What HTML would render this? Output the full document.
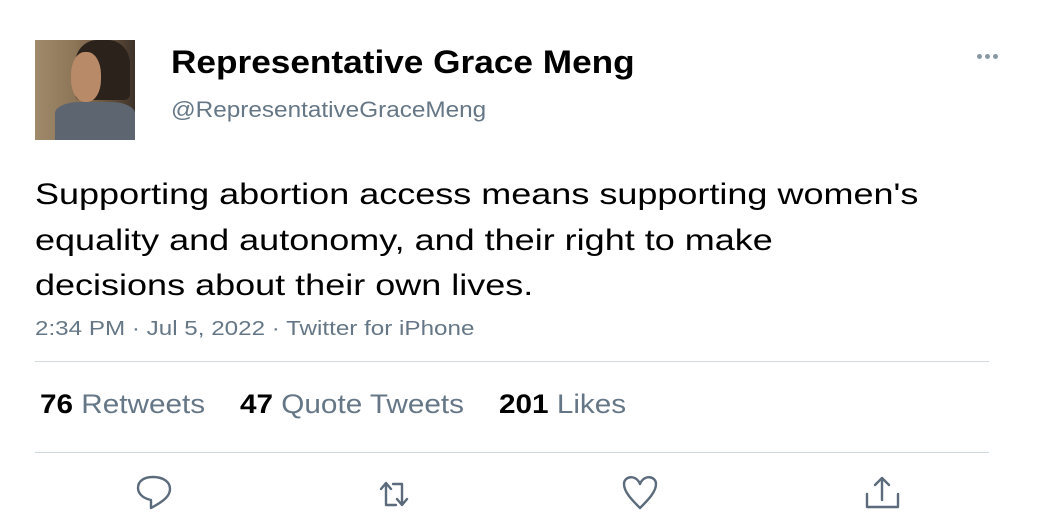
<!DOCTYPE html>
<html><head><meta charset="utf-8"><style>
body{margin:0;width:1050px;height:525px;background:#fff;font-family:"Liberation Sans",Arial,sans-serif;position:relative;overflow:hidden}
.a{position:absolute;white-space:nowrap;transform-origin:0 0}
</style></head><body>
<div class="a" style="left:35px;top:40px;width:100px;height:100px;background:linear-gradient(90deg,#a08a6c 0%,#8d7557 40%,#6b5640 70%,#3d3128 100%)">
<div style="position:absolute;left:40px;top:0;width:55px;height:60px;background:#2b221c;border-radius:40% 40% 10% 10%"></div>
<div style="position:absolute;left:36px;top:12px;width:30px;height:50px;background:#b88a68;border-radius:45%"></div>
<div style="position:absolute;left:20px;top:62px;width:80px;height:38px;background:#5d6570;border-radius:30% 30% 0 0"></div>
</div>
<div class="a" style="left:171px;top:44px;font-size:32px;font-weight:bold;color:#000;transform:scaleX(1.1)">Representative Grace Meng</div>
<div class="a" style="left:171px;top:97px;font-size:22px;color:#657786;transform:scaleX(1.105)">@RepresentativeGraceMeng</div>
<div class="a" style="left:977px;top:54px;width:30px;height:6px">
<span style="position:absolute;left:0;width:5px;height:5px;border-radius:50%;background:#8899a6"></span>
<span style="position:absolute;left:8px;width:5px;height:5px;border-radius:50%;background:#8899a6"></span>
<span style="position:absolute;left:16px;width:5px;height:5px;border-radius:50%;background:#8899a6"></span></div>
<div class="a" style="left:35px;top:172px;font-size:30px;line-height:45.5px;color:#000;transform:scaleX(1.2)">Supporting abortion access means supporting women's<br>equality and autonomy, and their right to make<br>decisions about their own lives.</div>
<div class="a" style="left:35px;top:318px;font-size:20px;color:#657786;transform:scaleX(1.21)">2:34 PM · Jul 5, 2022 · Twitter for iPhone</div>
<div class="a" style="left:35px;top:361px;width:954px;height:1px;background:#cfd9de"></div>
<div class="a" style="left:40px;top:389px;font-size:27px;color:#657786;transform:scaleX(1.1)"><b style="color:#000">76</b> Retweets</div>
<div class="a" style="left:240px;top:389px;font-size:27px;color:#657786;transform:scaleX(1.1)"><b style="color:#000">47</b> Quote Tweets</div>
<div class="a" style="left:499px;top:389px;font-size:27px;color:#657786;transform:scaleX(1.1)"><b style="color:#000">201</b> Likes</div>
<div class="a" style="left:35px;top:452px;width:954px;height:1px;background:#cfd9de"></div>
<svg class="a" style="left:0;top:0" width="1050" height="525" fill="none" stroke="#5b6b7b" stroke-width="2.4" stroke-linecap="round" stroke-linejoin="round">
<path d="M151 508 L151 500 C141 498 138 492 138 488 C138 481 144 477 153 477 C162 477 170 481 170 489 C170 496 164 501 151 508Z"/>
<path d="M386 505 V484 M381 489 L386 483 L391 489 M386 505 H396 M393 484 H402 V505 M397 499 L402 505 L407 499"/>
<path d="M640 508 C632 500 624 492 624 484 C624 476 636 474 640 484 C644 474 656 476 656 484 C656 492 648 500 640 508Z"/>
<path d="M882 500 V478 M875 485 L882 478 L889 485 M867 494 V507 H898 V494"/>
</svg>
</body></html>
